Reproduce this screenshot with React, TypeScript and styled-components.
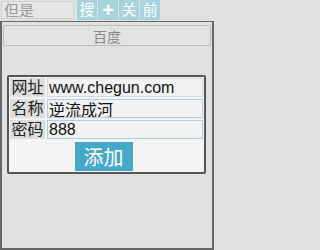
import React from 'react';
import styled, { createGlobalStyle } from 'styled-components';

const GlobalStyle = createGlobalStyle`
  html, body {
    margin: 0;
    padding: 0;
    background: #e1e1e1;
    font-family: "Liberation Sans", "Noto Sans CJK SC", sans-serif;
  }
`;

const Page = styled.div`
  width: 214px;
  height: 250px;
  display: flex;
  flex-direction: column;
  background: #e1e1e1;
  overflow: hidden;
`;

const TopBar = styled.div`
  display: flex;
  align-items: flex-start;
  height: 21px;
  gap: 1px;
`;

const SearchInput = styled.input`
  box-sizing: border-box;
  flex: none;
  width: 73px;
  height: 18px;
  margin: 1px 2px 0 1px;
  padding: 0 2px;
  border: 1px solid #d0d0d0;
  background: #e6e6e6;
  font-family: inherit;
  font-size: 15px;
  color: #999;
  outline: none;
  &::placeholder {
    color: #9a9a9a;
  }
`;

const ToolButton = styled.button<{ $big?: boolean }>`
  box-sizing: border-box;
  flex: none;
  width: 20px;
  height: 20px;
  padding: 0;
  border: none;
  background: #a6d3de;
  color: #fff;
  font-family: inherit;
  font-size: ${(p) => (p.$big ? '20px' : '15px')};
  font-weight: ${(p) => (p.$big ? 'bold' : 'normal')};
  line-height: 20px;
  text-align: center;
`;

const Panel = styled.div`
  flex: 1;
  display: flex;
  flex-direction: column;
  border: 2px solid #666;
  border-top: 1px solid #666;
  padding: 3px 1px 0;
`;

const WideButton = styled.button`
  box-sizing: border-box;
  height: 21px;
  border: 1px solid #bdbdbd;
  border-radius: 2px;
  background: #e3e3e3;
  color: #888;
  font-family: inherit;
  font-size: 14px;
  padding: 0;
`;

const FormBox = styled.div`
  box-sizing: border-box;
  margin: 29px 5px 0 4px;
  border: 2px solid #555;
  border-radius: 2px;
  background: #f4f4f4;
  padding: 1px 1px 1px 1px;
  display: flex;
  flex-direction: column;
  gap: 2px;
`;

const Row = styled.div`
  display: flex;
  gap: 2px;
  height: 19px;
`;

const Label = styled.div`
  flex: none;
  width: 35px;
  background: #dedede;
  color: #222;
  font-size: 16px;
  line-height: 19px;
  text-align: center;
  white-space: nowrap;
`;

const Field = styled.input<{ $focus?: boolean }>`
  box-sizing: border-box;
  flex: 1;
  width: 0;
  min-width: 0;
  height: 19px;
  padding: 0 1px;
  border: 1px solid ${(p) => (p.$focus ? '#a9cdeb' : '#d6d6d6')};
  background: #f2f2f2;
  color: #111;
  font-family: inherit;
  font-size: 16px;
  outline: none;
`;

const ButtonRow = styled.div`
  display: flex;
  justify-content: center;
  margin-top: 1px;
  padding-right: 6px;
`;

const AddButton = styled.button`
  width: 58px;
  height: 29px;
  padding: 0;
  border: none;
  background: #46a8c8;
  color: #fff;
  font-family: inherit;
  font-size: 20px;
`;

export default function App() {
    return (
        <Page>
            <GlobalStyle />
            <TopBar>
                <SearchInput placeholder="但是" />
                <ToolButton>搜</ToolButton>
                <ToolButton $big>+</ToolButton>
                <ToolButton>关</ToolButton>
                <ToolButton>前</ToolButton>
            </TopBar>
            <Panel>
                <WideButton>百度</WideButton>
                <FormBox>
                    <Row>
                        <Label>网址</Label>
                        <Field defaultValue="www.chegun.com" />
                    </Row>
                    <Row>
                        <Label>名称</Label>
                        <Field $focus defaultValue="逆流成河" />
                    </Row>
                    <Row>
                        <Label>密码</Label>
                        <Field $focus defaultValue="888" />
                    </Row>
                    <ButtonRow>
                        <AddButton>添加</AddButton>
                    </ButtonRow>
                </FormBox>
            </Panel>
        </Page>
    );
}
